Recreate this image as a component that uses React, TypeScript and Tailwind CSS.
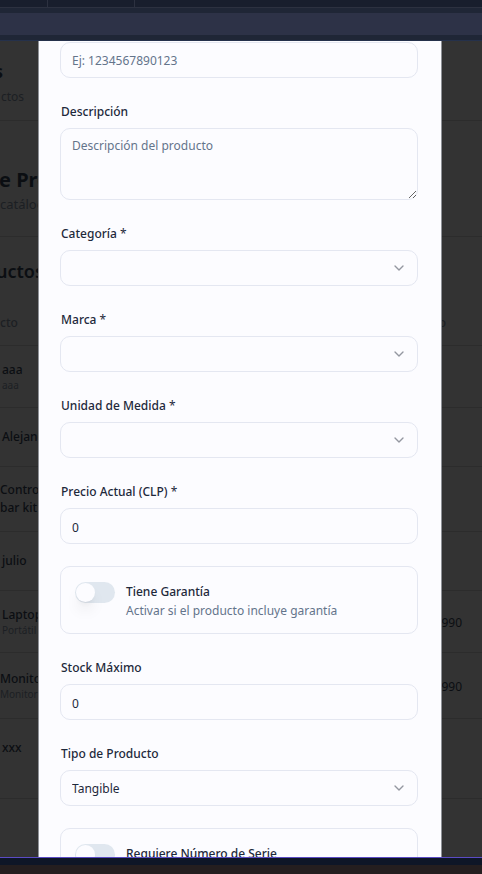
import { useId, type ReactNode } from "react";
import { ChevronDown } from "lucide-react";

const control =
  "block w-full rounded-[10px] border border-[#e4e7f1] bg-[#fcfcff] px-[11px] text-[12px] text-[#1e293b] outline-none placeholder:text-[#64748b]";

type FieldProps = { label: string; required?: boolean };

function Field({ label, required, children }: FieldProps & { children: (id: string) => ReactNode }) {
  const id = useId();
  return (
    <div>
      <label htmlFor={id} className="mb-[6px] block pt-[2px] pl-px text-[12px] leading-5 font-medium text-[#1e293b]">
        {label}
        {required && <span className="font-normal"> *</span>}
      </label>
      {children(id)}
    </div>
  );
}

function SelectField({ label, required, options }: FieldProps & { options: string[] }) {
  return (
    <Field label={label} required={required}>
      {(id) => (
        <div className="relative">
          <select id={id} className={`${control} h-9 appearance-none pt-[2px]`}>
            {options.map((o) => (
              <option key={o}>{o}</option>
            ))}
          </select>
          <ChevronDown
            className="pointer-events-none absolute top-[10px] right-[11px] size-4 text-[#9497a0]"
            strokeWidth={2}
          />
        </div>
      )}
    </Field>
  );
}

function NumberField({ label, required }: FieldProps) {
  return (
    <Field label={label} required={required}>
      {(id) => (
        <input id={id} type="text" inputMode="numeric" defaultValue="0" className={`${control} h-9 pt-[2px]`} />
      )}
    </Field>
  );
}

function SwitchCard({ label, hint }: { label: string; hint: string }) {
  const id = useId();
  return (
    <div className="flex h-[68px] items-start gap-[11px] rounded-[10px] border border-[#e4e7f1] px-[14px] pt-[15px]">
      <input
        id={id}
        type="checkbox"
        role="switch"
        className="h-[21px] w-10 shrink-0 appearance-none rounded-full bg-[#e0e7ef] p-px before:block before:size-[19px] before:rounded-full before:bg-[#fcfcff] before:shadow-lg checked:before:ml-[19px]"
      />
      <div className="text-[12px]">
        <label htmlFor={id} className="block leading-[19px] font-medium text-[#1e293b]">
          {label}
        </label>
        <p className="leading-[19px] text-[#64748b]">{hint}</p>
      </div>
    </div>
  );
}

type Row = { name: string; detail?: string; price?: string; height: string; indent: string };

const rows: Row[] = [
  { name: "aaa", detail: "aaa", height: "h-[62px]", indent: "pl-[2px]" },
  { name: "Alejandro", height: "h-[59px]", indent: "pl-[2px]" },
  { name: "Control bar kit", height: "h-[65px]", indent: "pl-0" },
  { name: "julio", height: "h-[59px]", indent: "pl-[2px]" },
  { name: "Laptop", detail: "Portátil", price: "990", height: "h-[62px]", indent: "pl-[2px]" },
  { name: "Monitor", detail: "Monitor", price: "990", height: "h-[66px]", indent: "pl-0" },
  { name: "xxx", height: "h-[60px]", indent: "pl-[2px]" },
];

function ProductsPage() {
  return (
    <div className="text-[#0b0e12]">
      <header className="h-20 border-b border-[#2c2c2c] pt-[18px]">
        <h1 className="-ml-1.5 text-[18px] leading-6 font-bold">s</h1>
        <p className="pt-1 pl-px text-[12px] leading-5 text-[#1c1f23]">ctos</p>
      </header>
      <section className="h-[116px] border-b border-[#2c2c2c] pt-[45px]">
        <h2 className="-ml-px text-[20px] leading-7 font-bold">e Productos</h2>
        <p className="text-[13px] leading-5 text-[#1c1f23]">catálogo</p>
      </section>
      <section className="border-b border-[#2c2c2c] pb-5">
        <h3 className="-ml-1 h-16 pt-5 text-[18px] leading-7 font-semibold">uctos</h3>
        <table className="w-full border-collapse text-left text-[12px]">
          <thead>
            <tr className="h-11 border-b border-[#2c2c2c] text-[#1c1f23]">
              <th className="font-medium">cto</th>
              <th className="pr-9 text-right font-medium">o</th>
            </tr>
          </thead>
          <tbody>
            {rows.map((r) => (
              <tr key={r.name} className={`${r.height} border-b border-[#2c2c2c] last:border-0`}>
                <td className={`${r.indent} w-[56px] py-0 leading-[18px] font-medium`}>
                  {r.name}
                  {r.detail && (
                    <div className="text-[10px] leading-[13px] font-normal text-[#1c1f23]">{r.detail}</div>
                  )}
                </td>
                <td className="pt-[3px] pr-5 text-right">{r.price}</td>
              </tr>
            ))}
          </tbody>
        </table>
      </section>
    </div>
  );
}

export default function App() {
  return (
    <div className="flex h-screen flex-col overflow-hidden bg-[#333333] font-['Noto_Sans','Open_Sans',sans-serif]">
      <div className="flex h-[7px] shrink-0 bg-[#181e2d]">
        <div className="w-12 border-r border-[#2c3140]" />
        <div className="w-[87px] border-r border-[#2c3140]" />
      </div>
      <div className="h-[34px] shrink-0 border-t border-b border-t-[#2c3140] border-b-[#25314b] bg-[#1f2636] py-[5px]">
        <div className="h-[22px] bg-[#2d3247]" />
      </div>

      <main className="relative min-h-0 flex-1 overflow-hidden">
        <ProductsPage />
        <div className="absolute inset-0 pr-10 pl-[38px]">
          <form
            role="dialog"
            aria-label="Producto"
            className="h-full overflow-hidden border-x border-[#8e9197] bg-[#fcfcff] pt-px pr-[23px] pl-[21px]"
          >
            <div className="flex flex-col gap-[22px]">
              <input
                type="text"
                aria-label="Código"
                placeholder="Ej: 1234567890123"
                className={`${control} h-9`}
              />
              <Field label="Descripción">
                {(id) => (
                  <textarea
                    id={id}
                    placeholder="Descripción del producto"
                    className={`${control} h-[72px] resize-y py-[7px] leading-5`}
                  />
                )}
              </Field>
              <SelectField label="Categoría" required options={[""]} />
              <SelectField label="Marca" required options={[""]} />
              <SelectField label="Unidad de Medida" required options={[""]} />
              <NumberField label="Precio Actual (CLP)" required />
              <SwitchCard label="Tiene Garantía" hint="Activar si el producto incluye garantía" />
              <NumberField label="Stock Máximo" />
              <SelectField label="Tipo de Producto" options={["Tangible", "Intangible"]} />
              <SwitchCard label="Requiere Número de Serie" hint="Activar si cada unidad lleva serie" />
            </div>
          </form>
        </div>
      </main>

      <footer className="h-[17px] shrink-0 border-t border-[#5b4bc4] bg-[#241e1f]">
        <div className="h-[7px] bg-[#0e1627]" />
      </footer>
    </div>
  );
}
